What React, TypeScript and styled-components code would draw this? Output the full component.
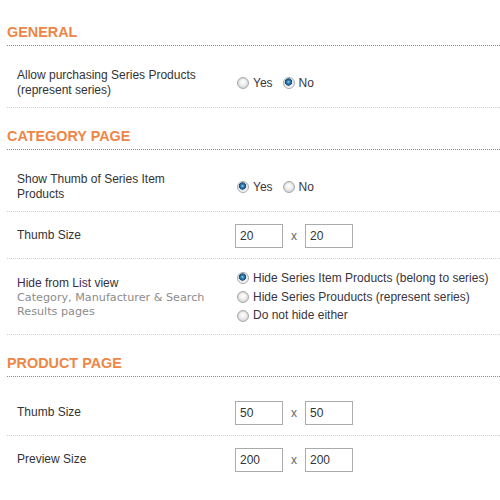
import React, { FC } from 'react';
import styled, { createGlobalStyle } from 'styled-components';

const GlobalStyle = createGlobalStyle`
  html, body {
    margin: 0;
    padding: 0;
    background: #ffffff;
  }
  body {
    font-family: 'Liberation Sans', Arial, sans-serif;
    font-size: 12px;
    color: #333333;
  }
`;

const Page = styled.div`
  width: 493px;
  padding: 24px 0 0 7px;
  overflow: hidden;
`;

const Section = styled.section`
  margin-bottom: 20px;
`;

const Heading = styled.h2`
  margin: 0 0 12px;
  padding-bottom: 4px;
  font-family: 'Liberation Sans', Arial, sans-serif;
  font-size: 14.4px;
  line-height: 17px;
  font-weight: bold;
  color: #ee8646;
  border-bottom: 1px dotted #8a8a8a;
`;

const Row = styled.div<{ $last?: boolean }>`
  display: grid;
  grid-template-columns: 228px 1fr;
  align-items: center;
  padding: 10px 0 9px;
  border-bottom: ${p => (p.$last ? 'none' : '1px dotted #cfcfcf')};
`;

const Label = styled.div`
  padding-left: 10px;
  line-height: 15px;
  color: #333333;
`;

const Hint = styled.div`
  font-family: 'DejaVu Sans', Verdana, sans-serif;
  font-size: 11.2px;
  line-height: 13.5px;
  color: #8c8c8c;
`;

const Accent = styled.span`
  color: #3d2c52;
`;

const Options = styled.div<{ $stacked?: boolean }>`
  display: flex;
  flex-direction: ${p => (p.$stacked ? 'column' : 'row')};
  gap: ${p => (p.$stacked ? '0' : '10px')};
  padding-left: 2px;
`;

const Option = styled.label`
  display: flex;
  align-items: center;
  gap: 4px;
  line-height: 18.7px;
  color: #3a3440;
  cursor: pointer;
`;

const Radio = styled.span<{ $checked?: boolean }>`
  width: 12px;
  height: 12px;
  box-sizing: border-box;
  border-radius: 50%;
  border: 1px solid #a9a9a9;
  background: ${p =>
    p.$checked
      ? 'radial-gradient(circle at 45% 40%, #9fd0ee 0, #2f7fb5 1.6px, #174f7a 3.4px, #e6e6e6 3.9px, #f8f8f8 6px)'
      : 'radial-gradient(circle at 50% 40%, #ffffff 0, #f0f0f0 3px, #d4d4d4 6px)'};
  box-shadow: inset 0 1px 1px rgba(0, 0, 0, 0.08);
`;

const SizeRow = styled.div`
  display: flex;
  align-items: center;
  gap: 8px;
  padding: 1.5px 0;
`;

const SizeInput = styled.input`
  width: 48px;
  height: 24px;
  box-sizing: border-box;
  margin: 0;
  padding: 0 4px;
  border: 1px solid #ababab;
  font-family: 'Liberation Sans', Arial, sans-serif;
  font-size: 12px;
  color: #333333;
  background: #ffffff;
`;

const Times = styled.span`
  color: #666666;
`;

type SizeProps = { w: string; h: string };

const SizeField: FC<SizeProps> = ({ w, h }) => (
  <SizeRow>
    <SizeInput defaultValue={w} />
    <Times>x</Times>
    <SizeInput defaultValue={h} />
  </SizeRow>
);

type YesNoProps = { yes: boolean };

const YesNo: FC<YesNoProps> = ({ yes }) => (
  <Options>
    <Option>
      <Radio $checked={yes} />
      Yes
    </Option>
    <Option>
      <Radio $checked={!yes} />
      No
    </Option>
  </Options>
);

const App: FC = () => {
  return (
    <Page>
      <GlobalStyle />
      <Section>
        <Heading>GENERAL</Heading>
        <Row>
          <Label>
            Allow purchasing Series Products
            <br />
            (represent series)
          </Label>
          <YesNo yes={false} />
        </Row>
      </Section>

      <Section>
        <Heading>CATEGORY PAGE</Heading>
        <Row>
          <Label>
            Show Thumb of Series Item
            <br />
            Products
          </Label>
          <YesNo yes />
        </Row>
        <Row>
          <Label>Thumb Size</Label>
          <SizeField w="20" h="20" />
        </Row>
        <Row>
          <Label>
            <Accent>Hide</Accent> from <Accent>List</Accent> view
            <Hint>
              Category, Manufacturer &amp; Search
              <br />
              Results pages
            </Hint>
          </Label>
          <Options $stacked>
            <Option>
              <Radio $checked />
              Hide Series Item Products (belong to series)
            </Option>
            <Option>
              <Radio />
              Hide Series Prouducts (represent series)
            </Option>
            <Option>
              <Radio />
              Do not hide either
            </Option>
          </Options>
        </Row>
      </Section>

      <Section>
        <Heading>PRODUCT PAGE</Heading>
        <Row>
          <Label>Thumb Size</Label>
          <SizeField w="50" h="50" />
        </Row>
        <Row $last>
          <Label>Preview Size</Label>
          <SizeField w="200" h="200" />
        </Row>
      </Section>
    </Page>
  );
};

export default App;
